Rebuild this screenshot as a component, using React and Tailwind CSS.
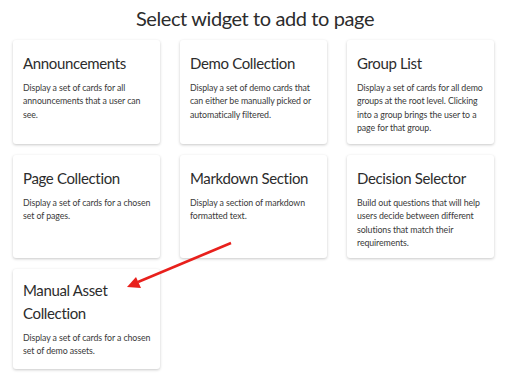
export default function App() {
  const cards = [
    { t: "Announcements", d: "Display a set of cards for all announcements that a user can see." },
    { t: "Demo Collection", d: "Display a set of demo cards that can either be manually picked or automatically filtered." },
    { t: "Group List", d: "Display a set of cards for all demo groups at the root level. Clicking into a group brings the user to a page for that group." },
    { t: "Page Collection", d: "Display a set of cards for a chosen set of pages." },
    { t: "Markdown Section", d: "Display a section of markdown formatted text." },
    { t: "Decision Selector", d: "Build out questions that will help users decide between different solutions that match their requirements." },
    { t: "Manual Asset Collection", d: "Display a set of cards for a chosen set of demo assets." },
  ];
  return (
    <div className="relative w-[510px] h-[376px] bg-white overflow-hidden" style={{ fontFamily: 'Lato, "Noto Sans", sans-serif' }}>
      <div className="pt-[4px] text-center text-[20px] tracking-[-0.4px] leading-[28px] text-[#2c2c2c]">Select widget to add to page</div>
      <div className="ml-[13px] mt-[8px] grid grid-cols-[147px_147px_147px] gap-x-[20px] gap-y-[11px]">
        {cards.map((c, i) => (
          <div key={i} className={`bg-white rounded-[3px] shadow-[0_1px_3px_rgba(0,0,0,0.22)] pl-[10px] pr-[9px] ${i < 3 ? "h-[104px] pt-[12px]" : i < 6 ? "h-[103px] pt-[12px]" : "h-[100px] pt-[10px]"}`}>
            <div className="text-[15px] tracking-[-0.35px] leading-[23px] text-[#2c2c2c]">{c.t}</div>
            <div className="mt-[6px] text-[8.8px] tracking-[-0.1px] leading-[13.3px] text-[#3a3a3a]">{c.d}</div>
          </div>
        ))}
      </div>
      <svg className="absolute left-0 top-0" width="510" height="376">
        <line x1="231" y1="243" x2="138" y2="282" stroke="#e8201c" strokeWidth="2.5" />
        <polygon points="127,287 136,277 141,288" fill="#e8201c" />
      </svg>
    </div>
  );
}
